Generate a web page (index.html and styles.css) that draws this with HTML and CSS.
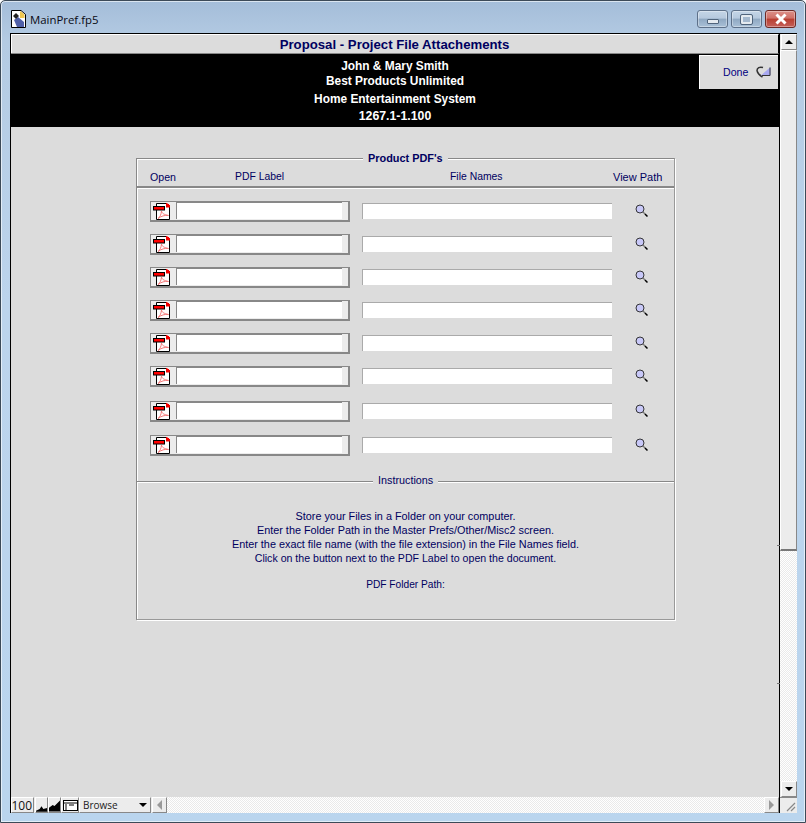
FILE: index.html
```html
<!DOCTYPE html>
<html lang="en">
<head>
<meta charset="utf-8">
<title>MainPref.fp5</title>
<link rel="stylesheet" href="styles.css">
</head>
<body>
<svg class="defs" width="0" height="0" aria-hidden="true">
  <symbol id="pdf" viewBox="0 0 18 18">
    <path d="M3.500 1.500H13l3.500 3V17.500H3.500Z" fill="#fff" stroke="#000" stroke-width="1"/>
    <path d="M13 1h1.500v1H16v1h1v2.500h-4Z" fill="#f00000"/>
    <rect x="0.500" y="4.500" width="11" height="3.500" fill="#ff0000" stroke="#000" stroke-width="1"/>
    <path d="M5 16.500c2-1.500 3-3.500 3.500-7.500 .5 2.500 2.500 3.500 7 4.500-4-.5-7 .5-10.500 3Z" fill="none" stroke="#f47a7a" stroke-width="1"/>
  </symbol>
  <symbol id="lens" viewBox="0 0 14 14">
    <circle cx="5" cy="5" r="4" fill="#c8c8f8" stroke="#222" stroke-width=".9"/>
    <path d="M8 8l2 2" stroke="#777" stroke-width="1.200"/>
    <path d="M10 10l2.500 2.500" stroke="#000" stroke-width="1.500"/>
  </symbol>
</svg>
<div class="window">
  <header class="titlebar">
    <svg class="appicon" width="15" height="18" viewBox="0 0 15 18">
      <path d="M.5 .5H10l4.500 4v13H.5Z" fill="#fff" stroke="#000"/>
      <path d="M9 1.500h1l3.500 3V8H9Z" fill="#f0c850"/>
      <path d="M3 10l4-3 6 5v5H6Z" fill="#5060a8"/>
      <path d="M2 6l3-3 3 3-3 3Z" fill="#222"/>
    </svg>
    <span class="wintitle">MainPref.fp5</span>
    <div class="winbuttons">
      <div class="winbtn"><span class="glyph-min"></span></div>
      <div class="winbtn"><span class="glyph-max"></span></div>
      <div class="winbtn winclose">
        <svg width="14" height="12" viewBox="0 0 14 12"><path d="M2.500 1.500l9 9M11.500 1.500l-9 9" stroke="#fff" stroke-width="3"/></svg>
      </div>
    </div>
  </header>

  <div class="client">
    <main class="main">
      <div class="pagehead">Proposal - Project File Attachements</div>
      <div class="band">
        <div class="bandtext">
          <div class="bandline">John &amp; Mary Smith</div>
          <div class="bandline">Best Products Unlimited</div>
          <div class="bandline bandgap">Home Entertainment System</div>
          <div class="bandline bandgap bandnum">1267.1-1.100</div>
        </div>
        <div class="done">
          <span>Done</span>
          <svg width="15" height="12" viewBox="0 0 15 12">
            <path d="M7 1.500C3.500 .5 1 2 1 4.500 1.500 7 4 9.500 6.500 11" fill="none" stroke="#333" stroke-width="1.500"/>
            <path d="M14.500 1V9.500H5Z" fill="#a8a8f0"/>
            <path d="M14 1.500V9.500H6" fill="none" stroke="#333" stroke-width="1"/>
          </svg>
        </div>
      </div>

      <div class="body">
        <section class="panel">
          <span class="legend legend-top">Product PDF's</span>
          <div class="colheads">
            <span class="col col-open">Open</span>
            <span class="col col-label">PDF Label</span>
            <span class="col col-file">File Names</span>
            <span class="col col-view">View Path</span>
          </div>
          <div class="rows">
            <div class="row">
              <div class="labelbox"><svg class="pdf"><use href="#pdf"/></svg><div class="labelinput"></div></div>
              <div class="fileinput"></div>
              <svg class="lens"><use href="#lens"/></svg>
            </div>
            <div class="row">
              <div class="labelbox"><svg class="pdf"><use href="#pdf"/></svg><div class="labelinput"></div></div>
              <div class="fileinput"></div>
              <svg class="lens"><use href="#lens"/></svg>
            </div>
            <div class="row">
              <div class="labelbox"><svg class="pdf"><use href="#pdf"/></svg><div class="labelinput"></div></div>
              <div class="fileinput"></div>
              <svg class="lens"><use href="#lens"/></svg>
            </div>
            <div class="row">
              <div class="labelbox"><svg class="pdf"><use href="#pdf"/></svg><div class="labelinput"></div></div>
              <div class="fileinput"></div>
              <svg class="lens"><use href="#lens"/></svg>
            </div>
            <div class="row">
              <div class="labelbox"><svg class="pdf"><use href="#pdf"/></svg><div class="labelinput"></div></div>
              <div class="fileinput"></div>
              <svg class="lens"><use href="#lens"/></svg>
            </div>
            <div class="row">
              <div class="labelbox"><svg class="pdf"><use href="#pdf"/></svg><div class="labelinput"></div></div>
              <div class="fileinput"></div>
              <svg class="lens"><use href="#lens"/></svg>
            </div>
            <div class="row row-shift2">
              <div class="labelbox"><svg class="pdf"><use href="#pdf"/></svg><div class="labelinput"></div></div>
              <div class="fileinput"></div>
              <svg class="lens"><use href="#lens"/></svg>
            </div>
            <div class="row row-shift1">
              <div class="labelbox"><svg class="pdf"><use href="#pdf"/></svg><div class="labelinput"></div></div>
              <div class="fileinput"></div>
              <svg class="lens"><use href="#lens"/></svg>
            </div>
          </div>
          <div class="instructions">
            <span class="legend legend-mid">Instructions</span>
            <p class="instr">Store your Files in a Folder on your computer.</p>
            <p class="instr">Enter the Folder Path in the Master Prefs/Other/Misc2 screen.</p>
            <p class="instr">Enter the exact file name (with the file extension) in the File Names field.</p>
            <p class="instr instr-click">Click on the button next to the PDF Label to open the document.</p>
            <p class="instr instr-path">PDF Folder Path:</p>
          </div>
        </section>
      </div>

      <footer class="status">
        <div class="sbtn zoomval">100</div>
        <div class="sbtn mtn">
          <svg width="12" height="8" viewBox="0 0 12 8"><path d="M0 8V7l4-2 2-3 2 3 4-1v4Z" fill="#000"/></svg>
        </div>
        <div class="sbtn mtn">
          <svg width="12" height="12" viewBox="0 0 12 12"><path d="M0 12V8l4-3 2 1 6-6v12Z" fill="#000"/></svg>
        </div>
        <div class="sbtn layouticon">
          <svg width="15" height="11" viewBox="0 0 15 11"><rect x=".5" y=".5" width="14" height="10" fill="#fff" stroke="#000"/><path d="M1 3h13" stroke="#000"/><path d="M2 5h2M2 7h2M2 9h2M6 5h5" stroke="#000"/></svg>
        </div>
        <div class="sbtn mode"><span>Browse</span><i class="tri-down"></i></div>
        <div class="sbtn arrowbtn"><i class="tri-left"></i></div>
        <div class="hatch htrack"></div>
        <div class="sbtn arrowbtn"><i class="tri-right"></i></div>
      </footer>
    </main>
    <aside class="vscroll">
      <span class="tick tick-a"></span>
      <span class="tick tick-b"></span>
      <div class="sbtn vbtn"><i class="tri-up"></i></div>
      <div class="vthumb"></div>
      <div class="hatch vtrack"></div>
      <div class="sbtn vbtn"><i class="tri-down"></i></div>
      <div class="grip">
        <svg width="10" height="10" viewBox="0 0 10 10"><path d="M1 9l8-8M5 9l4-4" stroke="#888" stroke-width="1.200"/></svg>
      </div>
    </aside>
  </div>
</div>
</body>
</html>
```
FILE: styles.css
```css
* { box-sizing: border-box; }
html, body { margin: 0; padding: 0; }
body { width: 806px; height: 823px; overflow: hidden; font-family: "Liberation Sans", Arial, sans-serif; }
.defs { position: absolute; }

.window {
  width: 806px; height: 823px;
  display: flex; flex-direction: column;
  background: linear-gradient(180deg, #a4bdd9 0, #b4cbe3 40px, #bcd4ec 300px, #bad5ee 823px);
  border: 1px solid #3c4a58;
  border-radius: 5px 5px 0 0;
  box-shadow: inset 0 0 0 1px rgba(255,255,255,.6);
}
.titlebar { height: 32px; flex: none; display: flex; align-items: center; padding: 0 0 0 10px; }
.appicon { flex: none; margin-right: 4px; margin-top: 4px; }
.wintitle { font-family: "Open Sans", "Liberation Sans", sans-serif; font-size: 11.4px; color: #0a0a14; margin-top: 5px; }
.winbuttons { margin-left: auto; display: flex; gap: 3px; margin-right: 9px; margin-top: 9px; align-self: flex-start; }
.winbtn {
  width: 31px; height: 18px; display: flex; align-items: center; justify-content: center;
  border: 1px solid #5d7089; border-radius: 3px;
  background: linear-gradient(180deg, #c4d5e7 0, #b6c9de 45%, #8fa8c2 50%, #a9c0d7 100%);
  box-shadow: inset 0 0 0 1px rgba(255,255,255,.35);
}
.winclose { border-color: #6d2a26; background: linear-gradient(180deg, #dc9088 0, #d07068 45%, #b83e30 50%, #c4605a 100%); }
.glyph-min { width: 12px; height: 5px; margin-top: 5px; background: #e4eaf0; border: 1px solid #50647c; border-radius: 1px; }
.glyph-max { width: 11px; height: 9px; background: #a4b8ce; border: 2px solid #e4eaf0; outline: 1px solid #50647c; border-radius: 1px; }

.client {
  flex: none; height: 780px; margin: 0 8px 0 9px;
  display: flex; border: solid #000; border-width: 1px 0 0 1px; background: #dcdcdc;
}
.main { width: 768px; flex: none; display: flex; flex-direction: column; min-height: 0; }

.pagehead {
  height: 20px; flex: none; text-align: center;
  font-size: 13.2px; line-height: 19px; font-weight: 700; color: #000060;
  background: #dcdcdc; border-bottom: 1px solid #888; border-top: 1px solid #fff; border-right: 1px solid #000;
  box-shadow: inset 1px 0 0 #fff;
}
.band {
  height: 73px; flex: none; background: #000; position: relative;
  display: flex; justify-content: center;
}
.bandtext { padding-top: 5px; color: #fff; font-size: 11.9px; font-weight: 700; text-align: center; width: 768px; }
.bandline { line-height: 15px; }
.bandline + .bandgap { margin-top: 3px; }
.bandgap + .bandgap { margin-top: 2px; }
.bandnum { font-size: 12.3px; }
.done {
  position: absolute; right: 1px; top: 1px; width: 79px; height: 34px;
  display: flex; align-items: center; gap: 8px; padding: 0 0 2px 23px;
  background: #dcdcdc; border-top: 1px solid #fff; border-left: 1px solid #fff;
  font-size: 10.6px; color: #000080;
}

.body { flex: 1; min-height: 0; padding: 31px 0 0 125px; }
.panel {
  position: relative; width: 539px; height: 462px;
  border: 1px solid #888; border-right-color: #999; border-bottom-color: #999;
  box-shadow: 1px 1px 0 #fff, inset 1px 1px 0 #fff;
  display: flex; flex-direction: column;
}
.legend {
  position: absolute; background: #dcdcdc; color: #000060; line-height: 12px; padding: 0 5px;
  white-space: nowrap;
}
.legend-top { top: -7px; left: 226px; font-weight: 700; font-size: 10.9px; }
.legend-mid { top: -8px; left: 236px; font-size: 10.8px; }

.colheads {
  height: 29px; flex: none; position: relative;
  border-bottom: 2px solid #888; box-shadow: 0 1px 0 #fff;
  font-size: 10.4px; color: #000060;
}
.col { position: absolute; top: 12px; line-height: 12px; white-space: nowrap; }
.col-open { left: 13px; font-size: 10.6px; }
.col-label { left: 98px; }
.col-file { left: 313px; }
.col-view { left: 476px; font-size: 11px; }

.rows { height: 293px; flex: none; padding-top: 13px; display: flex; flex-direction: column; gap: 13px; }
.row { height: 20px; flex: none; display: flex; align-items: center; padding-left: 13px; }
.row-shift2 { margin-top: 2px; }
.row-shift1 { margin-top: 1px; }
.labelbox {
  width: 200px; height: 21px; flex: none; display: flex; align-items: center;
  border: 2px solid #888; border-top-width: 1px; border-left-width: 1px;
  background: #ececec; padding: 0 6px 0 2px;
}
.pdf { width: 18px; height: 18px; flex: none; margin-right: 5px; }
.labelinput { flex: 1; height: 17px; background: #fff; border-left: 1px solid #888; border-top: 1px solid #888; }
.fileinput { width: 250px; height: 16px; flex: none; margin-left: 12px; background: #fff; border-left: 1px solid #aaa; border-top: 1px solid #aaa; }
.lens { width: 14px; height: 14px; flex: none; margin-left: 23px; }

.instructions { flex: 1; position: relative; border-top: 1px solid #888; box-shadow: inset 0 1px 0 #fff; padding-top: 27px; }
.instr { margin: 0; text-align: center; font-size: 10.85px; line-height: 14px; color: #000060; }
.instr-click { font-size: 10.6px; }
.instr-path { margin-top: 13px; font-size: 10.2px; }

.status { height: 16px; flex: none; display: flex; background: #ececec; }
.sbtn { display: flex; align-items: center; justify-content: center; background: #ececec; border: 1px solid #fff; border-right-color: #888; border-bottom-color: #888; }
.zoomval { width: 23px; margin-right: 1px; font-family: "Open Sans", sans-serif; font-size: 12px; justify-content: flex-end; padding-right: 1px; color: #111; }
.mtn { width: 13px; align-items: flex-end; padding: 0; overflow: hidden; }
.layouticon { width: 18px; }
.mode { width: 72px; margin-right: 1px; justify-content: space-between; padding: 0 3px; font-family: "Open Sans", sans-serif; font-size: 10px; color: #222; }
.arrowbtn { width: 15px; }
.hatch { background-color: #f6f6f6; background-image: repeating-conic-gradient(#fff 0 25%, #eaeaea 0 50%); background-size: 2px 2px; }
.htrack { flex: 1; }
.tri-down, .tri-up, .tri-left, .tri-right { display: block; width: 0; height: 0; border-style: solid; }
.tri-down { border-width: 4px 4px 0; border-color: #000 transparent transparent; }
.tri-up { border-width: 0 4px 4px; border-color: transparent transparent #000; }
.tri-left { border-width: 5px 5px 5px 0; border-color: transparent #999 transparent transparent; }
.tri-right { border-width: 5px 0 5px 5px; border-color: transparent transparent transparent #999; }

.vscroll { position: relative; flex: 1; min-width: 0; display: flex; flex-direction: column; border-left: 1px solid #000; background: #ececec; }
.tick { position: absolute; left: -3px; width: 3px; height: 1px; background: #777; }
.tick-a { top: 511px; }
.tick-b { top: 649px; }
.vbtn { height: 16px; flex: none; margin-left: 1px; }
.vthumb { height: 501px; flex: none; background: #ececec; border: 1px solid #fff; border-right: 1px solid #888; border-bottom: 2px solid #777; }
.vtrack { flex: 1; }
.grip { height: 16px; flex: none; display: flex; align-items: flex-end; justify-content: flex-end; background: #ececec; border-top: 1px solid #888; padding: 0 1px 1px 0; }
```
